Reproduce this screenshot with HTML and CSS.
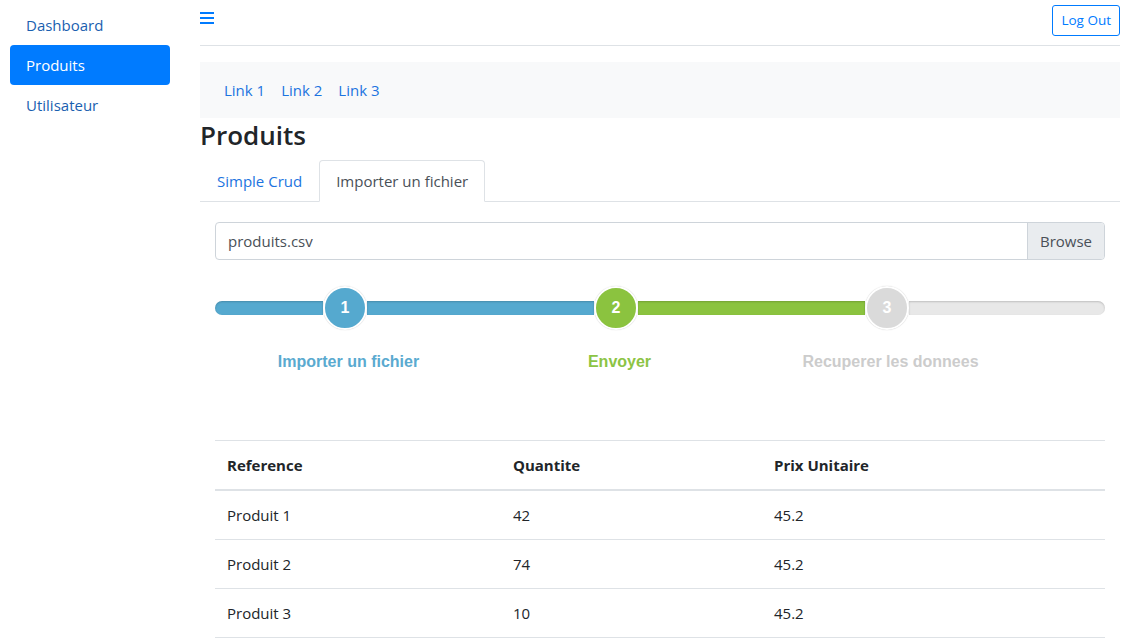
FILE: index.html
```html
<!DOCTYPE html>
<html lang="fr">
<head>
<meta charset="utf-8">
<title>Produits</title>
<link rel="stylesheet" href="styles.css">
</head>
<body>
<div class="layout">
  <aside class="sidebar">
    <a class="side-link" href="#">Dashboard</a>
    <a class="side-link active" href="#">Produits</a>
    <a class="side-link" href="#">Utilisateur</a>
  </aside>
  <main class="main">
    <div class="topbar">
      <svg class="burger" width="14" height="12" viewBox="0 0 14 12" aria-hidden="true">
        <rect x="0" y="0" width="14" height="2" fill="#007bff"/>
        <rect x="0" y="5" width="14" height="2" fill="#007bff"/>
        <rect x="0" y="10" width="14" height="2" fill="#007bff"/>
      </svg>
      <button class="btn-logout">Log Out</button>
    </div>
    <nav class="navbar">
      <a class="nav-link" href="#">Link 1</a>
      <a class="nav-link" href="#">Link 2</a>
      <a class="nav-link" href="#">Link 3</a>
    </nav>
    <h3 class="title">Produits</h3>
    <div class="tabs">
      <a class="tab" href="#">Simple Crud</a>
      <a class="tab active" href="#">Importer un fichier</a>
    </div>
    <div class="tab-content">
      <div class="file-input">
        <span class="file-name">produits.csv</span>
        <span class="file-browse">Browse</span>
      </div>
      <div class="stepper">
        <div class="seg seg-blue seg-first"></div>
        <div class="step step-blue"><div class="dot">1</div><div class="label">Importer un fichier</div></div>
        <div class="seg seg-blue seg-mid"></div>
        <div class="step step-green"><div class="dot">2</div><div class="label">Envoyer</div></div>
        <div class="seg seg-green seg-mid"></div>
        <div class="step step-gray"><div class="dot">3</div><div class="label">Recuperer les donnees</div></div>
        <div class="seg seg-gray seg-last"></div>
      </div>
      <table class="table">
        <thead>
          <tr><th class="col-ref">Reference</th><th class="col-qte">Quantite</th><th>Prix Unitaire</th></tr>
        </thead>
        <tbody>
          <tr><td>Produit 1</td><td>42</td><td>45.2</td></tr>
          <tr><td>Produit 2</td><td>74</td><td>45.2</td></tr>
          <tr><td>Produit 3</td><td>10</td><td>45.2</td></tr>
        </tbody>
      </table>
    </div>
  </main>
</div>
</body>
</html>
```
FILE: styles.css
```css
* { box-sizing: border-box; }
html, body { margin: 0; padding: 0; }
body {
  font-family: "Open Sans", "Noto Sans", "Liberation Sans", sans-serif;
  font-size: 15px;
  line-height: 24px;
  color: #212529;
  background: #fff;
}
a { text-decoration: none; }

.layout { display: flex; align-items: flex-start; }

.sidebar {
  width: 180px;
  flex-shrink: 0;
  padding: 5px 10px;
  display: flex;
  flex-direction: column;
}
.side-link {
  display: block;
  padding: 8px 16px;
  color: #1a5fb0;
  border-radius: 4px;
}
.side-link.active { background: #007bff; color: #fff; }

.main { flex: 1; padding: 0 10px 0 20px; min-width: 0; }

.topbar {
  display: flex;
  justify-content: space-between;
  align-items: flex-start;
  padding: 5px 0 9px;
  border-bottom: 1px solid #dee2e6;
}
.burger { margin-top: 7px; display: block; }
.btn-logout {
  font-family: inherit;
  font-size: 13.5px;
  line-height: 21px;
  padding: 4px 8px;
  color: #007bff;
  background: #fff;
  border: 1px solid #007bff;
  border-radius: 3px;
}

.navbar {
  margin-top: 16px;
  background: #f8f9fa;
  padding: 8px 16px;
  display: flex;
}
.nav-link { padding: 8px 8px; color: #1c74e0; }

.title {
  margin: 0 0 8px;
  font-size: 26px;
  line-height: 34px;
  font-weight: 600;
  color: #212529;
}

.tabs {
  display: flex;
  border-bottom: 1px solid #dee2e6;
}
.tab {
  padding: 8px 16px;
  border: 1px solid transparent;
  border-top-left-radius: 4px;
  border-top-right-radius: 4px;
  margin-bottom: -1px;
  color: #1c74e0;
}
.tab.active {
  color: #495057;
  background: #fff;
  border-color: #dee2e6 #dee2e6 #fff;
}

.tab-content { padding: 20px 15px 0; }

.file-input {
  display: flex;
  border: 1px solid #ced4da;
  border-radius: 4px;
  height: 38px;
  overflow: hidden;
}
.file-name { flex: 1; padding: 6px 12px; color: #495057; }
.file-browse {
  padding: 6px 12px;
  background: #e9ecef;
  border-left: 1px solid #ced4da;
  color: #495057;
}

.stepper {
  display: flex;
  align-items: flex-start;
  margin-top: 26px;
}
.seg {
  height: 14px;
  margin-top: 15px;
  box-shadow: inset 0 1px 2px rgba(0,0,0,0.18);
}
.seg-first { width: 108px; border-radius: 7px 0 0 7px; }
.seg-mid { width: 227px; }
.seg-last { flex: 1; border-radius: 0 7px 7px 0; }
.seg-blue { background: #55a9cf; }
.seg-green { background: #8bc33f; }
.seg-gray { background: #e8e8e8; }

.step {
  width: 44px;
  flex-shrink: 0;
  display: flex;
  flex-direction: column;
  align-items: center;
}
.dot {
  width: 44px;
  height: 44px;
  border-radius: 50%;
  border: 2px solid #fff;
  display: flex;
  align-items: center;
  justify-content: center;
  font-family: "Liberation Sans", Arial, sans-serif;
  font-weight: bold;
  font-size: 16px;
  color: #fff;
  box-shadow: 0 0 1px rgba(0,0,0,0.25);
}
.label {
  margin-top: 22px;
  margin-left: 7px;
  white-space: nowrap;
  font-family: "Liberation Sans", Arial, sans-serif;
  font-weight: bold;
  font-size: 16px;
  line-height: 20px;
}
.step-blue .dot { background: #55a9cf; }
.step-blue .label { color: #5aaad0; }
.step-green .dot { background: #8bc33f; }
.step-green .label { color: #8cc444; }
.step-gray .dot { background: #dadada; }
.step-gray .label { color: #cccccc; }

.table {
  width: 100%;
  margin-top: 68px;
  border-collapse: collapse;
}
.table th, .table td {
  text-align: left;
  padding: 12px;
  border-top: 1px solid #dee2e6;
  vertical-align: top;
}
.table th { font-weight: 700; font-size: 15px; }
.table td { font-size: 15px; }
.table thead th { border-bottom: 2px solid #dee2e6; }
.table tbody tr:last-child td { border-bottom: 1px solid #dee2e6; }
.col-ref { width: 286px; }
.col-qte { width: 261px; }
```
